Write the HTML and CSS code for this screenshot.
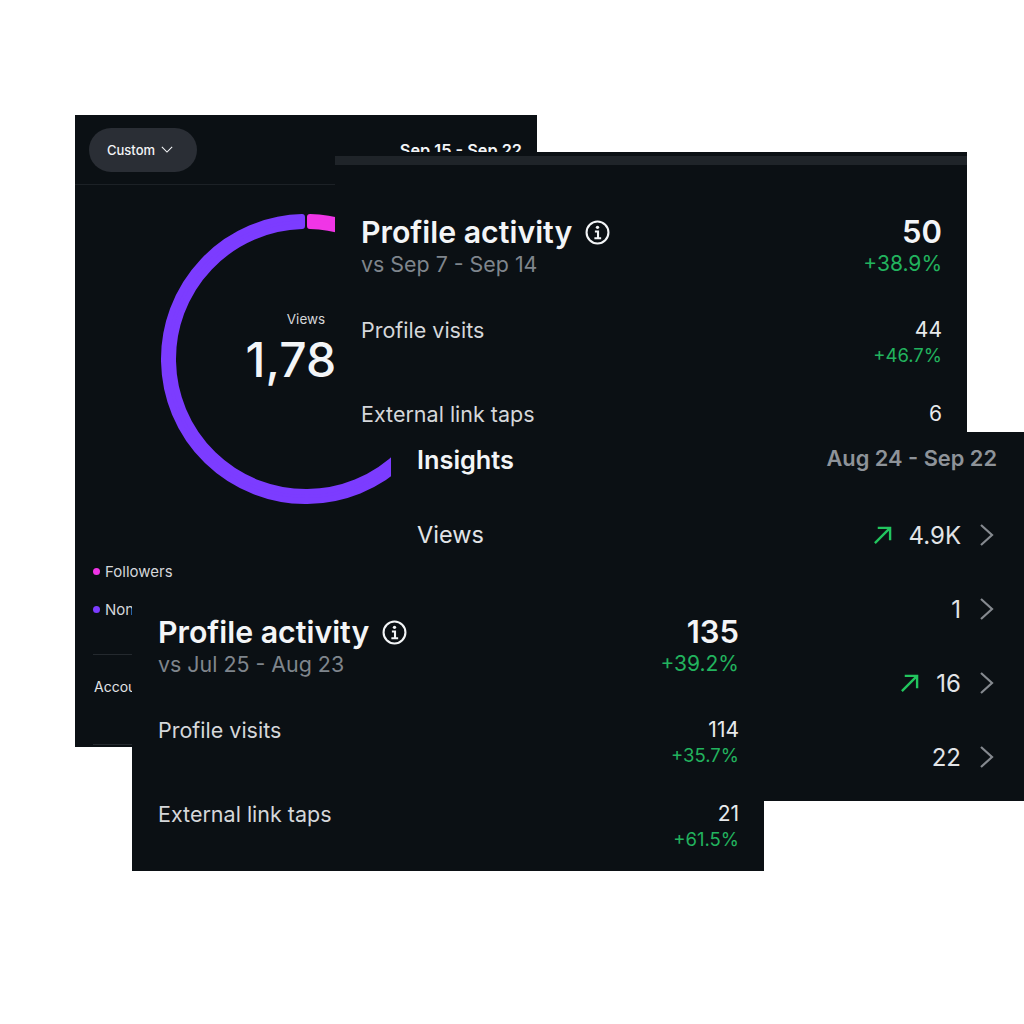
FILE: index.html
```html
<!DOCTYPE html>
<html lang="en">
<head>
    <meta charset="UTF-8">
    <title>Insights</title>
    <link rel="stylesheet" href="styles.css">
</head>
<body>
    <div class="panel panel-views">
        <div class="views-header">
            <div class="pill">Custom
                <svg class="pill-chevron" viewBox="0 0 14 8"><path d="M1 1l6 6 6-6"/></svg>
            </div>
            <div class="views-range">Sep 15 - Sep 22</div>
        </div>
        <div class="ring">
            <svg class="ring-svg" viewBox="0 0 290 290">
                <path class="ring-purple" d="M287 145A142 142 0 1 1 141 3.06L141 12.06A133 133 0 1 0 278 145Z"/>
                <path class="ring-pink" d="M149 3.06A142 142 0 0 1 185 8.75L185 18.16A133 133 0 0 0 149 12.06Z"/>
            </svg>
            <div class="ring-label">
                <div class="ring-title">Views</div>
                <div class="ring-value">1,788</div>
            </div>
        </div>
        <div class="legend">
            <div class="legend-item"><span class="dot dot-pink"></span>Followers</div>
            <div class="legend-item"><span class="dot dot-purple"></span>Non-followers</div>
        </div>
        <div class="views-rule"></div>
        <div class="views-foot">Accounts reached</div>
        <div class="views-rule views-rule-last"></div>
    </div>

    <div class="panel panel-sep">
        <div class="panel-strip"></div>
        <div class="activity">
            <div class="activity-row">
                <div>
                    <div class="activity-title">Profile activity
                        <svg class="info" viewBox="0 0 24 24">
                            <circle cx="12" cy="12" r="10.5"/>
                            <circle class="info-dot" cx="12" cy="7" r="1.6"/>
                            <path d="M9.5 11h3v6.5M9 17.5h6.5"/>
                        </svg>
                    </div>
                    <div class="activity-sub">vs Sep 7 - Sep 14</div>
                </div>
                <div class="num">
                    <div class="activity-total">50</div>
                    <div class="change change-big">+38.9%</div>
                </div>
            </div>
            <div class="stat-row">
                <div class="stat-name">Profile visits</div>
                <div class="num">
                    <div class="stat-value">44</div>
                    <div class="change">+46.7%</div>
                </div>
            </div>
            <div class="stat-row">
                <div class="stat-name">External link taps</div>
                <div class="num">
                    <div class="stat-value">6</div>
                </div>
            </div>
        </div>
    </div>

    <div class="panel panel-insights">
        <div class="insights-head">
            <div class="insights-title">Insights</div>
            <div class="insights-range">Aug 24 - Sep 22</div>
        </div>
        <div class="insight-row">
            <div class="insight-name">Views</div>
            <svg class="arrow" viewBox="0 0 20 20"><path d="M2 18L18 2M5 2h13v13"/></svg>
            <div class="insight-value">4.9K</div>
            <svg class="chevron" viewBox="0 0 14 22"><path d="M1 1l11 10-11 10"/></svg>
        </div>
        <div class="insight-row">
            <div class="insight-name"></div>
            <div class="insight-value">1</div>
            <svg class="chevron" viewBox="0 0 14 22"><path d="M1 1l11 10-11 10"/></svg>
        </div>
        <div class="insight-row">
            <div class="insight-name"></div>
            <svg class="arrow" viewBox="0 0 20 20"><path d="M2 18L18 2M5 2h13v13"/></svg>
            <div class="insight-value">16</div>
            <svg class="chevron" viewBox="0 0 14 22"><path d="M1 1l11 10-11 10"/></svg>
        </div>
        <div class="insight-row">
            <div class="insight-name"></div>
            <div class="insight-value">22</div>
            <svg class="chevron" viewBox="0 0 14 22"><path d="M1 1l11 10-11 10"/></svg>
        </div>
    </div>

    <div class="panel panel-aug">
        <div class="activity">
            <div class="activity-row">
                <div>
                    <div class="activity-title">Profile activity
                        <svg class="info" viewBox="0 0 24 24">
                            <circle cx="12" cy="12" r="10.5"/>
                            <circle class="info-dot" cx="12" cy="7" r="1.6"/>
                            <path d="M9.5 11h3v6.5M9 17.5h6.5"/>
                        </svg>
                    </div>
                    <div class="activity-sub">vs Jul 25 - Aug 23</div>
                </div>
                <div class="num">
                    <div class="activity-total">135</div>
                    <div class="change change-big">+39.2%</div>
                </div>
            </div>
            <div class="stat-row">
                <div class="stat-name">Profile visits</div>
                <div class="num">
                    <div class="stat-value">114</div>
                    <div class="change">+35.7%</div>
                </div>
            </div>
            <div class="stat-row">
                <div class="stat-name">External link taps</div>
                <div class="num">
                    <div class="stat-value">21</div>
                    <div class="change">+61.5%</div>
                </div>
            </div>
        </div>
    </div>
</body>
</html>
```

FILE: styles.css
```css
body {
    margin: 0;
    width: 1024px;
    height: 1024px;
    position: relative;
    overflow: hidden;
    background-color: #fff;
    font-family: Inter, "Liberation Sans", sans-serif;
    color: #f3f5f7;
}

/* the four screenshots are laid over each other like a collage */
.panel {
    position: absolute;
    background-color: #0b1014;
    overflow: hidden;
}

.panel-views {
    left: 75px;
    top: 115px;
    width: 462px;
    height: 632px;
}

.panel-sep {
    left: 335px;
    top: 152px;
    width: 632px;
    height: 280px;
}

.panel-insights {
    left: 391px;
    top: 432px;
    width: 633px;
    height: 369px;
}

.panel-aug {
    left: 132px;
    top: 590px;
    width: 632px;
    height: 281px;
}

/* views panel */
.views-header {
    height: 69px;
    padding: 0 15px 0 14px;
    display: flex;
    align-items: center;
    justify-content: space-between;
    border-bottom: 1px solid #1c2126;
}

.pill {
    width: 108px;
    height: 44px;
    box-sizing: border-box;
    padding-left: 18px;
    border-radius: 22px;
    background-color: #2a2e35;
    display: flex;
    align-items: center;
    gap: 6px;
    font-size: 13px;
    font-weight: 500;
}

.pill-chevron {
    width: 12px;
    height: 7px;
    fill: none;
    stroke: #f3f5f7;
    stroke-width: 1.3;
}

.views-range {
    font-size: 16.3px;
    font-weight: 600;
}

.ring {
    position: relative;
    width: 290px;
    height: 290px;
    margin: 29px 0 0 86px;
}

.ring-svg {
    display: block;
    width: 290px;
    height: 290px;
}

.ring-svg path {
    stroke-width: 6;
    stroke-linejoin: round;
}

.ring-purple {
    fill: #7c3cff;
    stroke: #7c3cff;
}

.ring-pink {
    fill: #f035e6;
    stroke: #f035e6;
}

.ring-label {
    position: absolute;
    left: 0;
    right: 0;
    top: 97px;
    text-align: center;
}

.ring-title {
    font-size: 13.5px;
    line-height: 16px;
    color: #d5d7da;
}

.ring-value {
    font-size: 48px;
    font-weight: 500;
    line-height: 66px;
}

.legend {
    margin: 59px 0 0 18px;
    display: flex;
    flex-direction: column;
    gap: 21px;
}

.legend-item {
    display: flex;
    align-items: center;
    gap: 5px;
    font-size: 15px;
    line-height: 17px;
    color: #d5d7da;
}

.dot {
    width: 7px;
    height: 7px;
    border-radius: 50%;
}

.dot-pink {
    background-color: #f035e6;
}

.dot-purple {
    background-color: #7c3cff;
}

.views-rule {
    height: 1px;
    margin: 36px 0 0 18px;
    background-color: #24292e;
}

.views-foot {
    margin: 23px 0 0 19px;
    font-size: 14px;
    line-height: 17px;
    color: #e2e4e7;
}

.views-rule-last {
    margin-top: 49px;
}

/* profile activity panels */
.panel-strip {
    height: 9px;
    margin-top: 4px;
    background-color: #1f2429;
}

.activity {
    padding: 0 25px 0 26px;
}

.panel-sep .activity {
    padding-top: 48px;
}

.panel-aug .activity {
    padding-top: 23px;
}

.activity-row {
    display: flex;
    justify-content: space-between;
}

.activity-title {
    display: flex;
    align-items: center;
    gap: 13px;
    font-size: 30.3px;
    font-weight: 600;
    line-height: 38px;
}

.info {
    width: 25px;
    height: 25px;
    fill: none;
    stroke: #f3f5f7;
    stroke-width: 2;
}

.info-dot {
    fill: #f3f5f7;
    stroke: none;
}

.activity-sub {
    font-size: 21.4px;
    line-height: 26px;
    color: #7f858c;
}

.num {
    text-align: right;
}

.activity-total {
    font-size: 31px;
    font-weight: 600;
    line-height: 38px;
}

.change {
    font-size: 18.5px;
    line-height: 24px;
    color: #22b35e;
}

.change-big {
    font-size: 21px;
    line-height: 26px;
}

.stat-row {
    display: flex;
    justify-content: space-between;
    min-height: 50px;
    margin-top: 40px;
    margin-bottom: -6px;
}

.stat-name {
    font-size: 21.5px;
    line-height: 26px;
    color: #d5d7da;
}

.stat-value {
    font-size: 21px;
    line-height: 26px;
    color: #e8eaec;
}

/* insights panel */
.insights-head {
    display: flex;
    justify-content: space-between;
    align-items: center;
    padding: 12px 27px 0 26px;
    height: 30px;
}

.insights-title {
    font-size: 25.3px;
    font-weight: 600;
}

.insights-range {
    padding-bottom: 2px;
    font-size: 21.8px;
    font-weight: 600;
    color: #8e9399;
}

.insight-row {
    height: 74px;
    padding: 0 30px 0 26px;
    display: flex;
    align-items: center;
}

.insights-head + .insight-row {
    margin-top: 24px;
}

.insight-name {
    flex: 1;
    padding-bottom: 2px;
    font-size: 23.5px;
    color: #e2e4e7;
}

.insight-value {
    font-size: 24px;
    color: #e2e4e7;
}

.arrow {
    width: 19px;
    height: 19px;
    margin-right: 17px;
    fill: none;
    stroke: #22c55e;
    stroke-width: 2.5;
}

.chevron {
    width: 14px;
    height: 22px;
    margin-left: 19px;
    fill: none;
    stroke: #85898f;
    stroke-width: 2.2;
}
```
